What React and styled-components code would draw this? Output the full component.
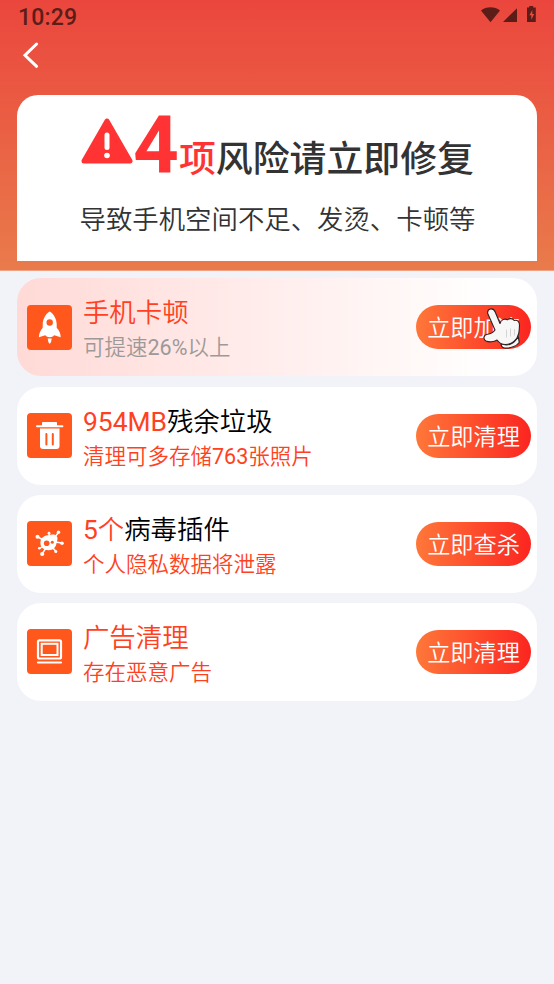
// src/App.jsx
import React from "react";
import styled, { createGlobalStyle } from "styled-components";

const colors = {
  bg: "#f2f3f9",
  red: "#ff3333",
  itemRed: "#ff4122",
  icon: "#ff571c",
  dark: "#333333",
  status: "#5c1d19",
  muted: "#9c9999"
};

const items = [
  {
    id: "speed",
    icon: <RocketIcon />,
    highlight: "手机卡顿",
    title: "",
    desc: "可提速26%以上",
    action: "立即加速",
    active: true
  },
  {
    id: "trash",
    icon: <TrashIcon />,
    highlight: "954MB",
    title: "残余垃圾",
    desc: "清理可多存储763张照片",
    action: "立即清理"
  },
  {
    id: "virus",
    icon: <VirusIcon />,
    highlight: "5个",
    title: "病毒插件",
    desc: "个人隐私数据将泄露",
    action: "立即查杀"
  },
  {
    id: "ads",
    icon: <ScreenIcon />,
    highlight: "广告清理",
    title: "",
    desc: "存在恶意广告",
    action: "立即清理"
  }
];

// Latin letters and digits need a heavier weight than the Chinese text
function MixedText({ text }) {
  return text
    .split(/([\w%]+)/)
    .map((part, i) => (i % 2 ? <Latin key={i}>{part}</Latin> : part));
}

export default function App() {
  return (
    <Screen>
      <GlobalStyle />
      <Header>
        <StatusBar>
          <Clock>10:29</Clock>
          <StatusIcons />
        </StatusBar>
        <NavBar>
          <BackButton aria-label="返回">
            <svg width="18" height="28" viewBox="0 0 18 28" fill="none">
              <path
                d="M15.6 3 4 14.300l11.600 11"
                stroke="#fff"
                strokeWidth="3"
                strokeLinecap="round"
              />
            </svg>
          </BackButton>
        </NavBar>
        <Summary>
          <SummaryTitle>
            <WarningIcon />
            <Count>4</Count>
            <Unit>项</Unit>
            <span>风险请立即修复</span>
          </SummaryTitle>
          <SummaryText>导致手机空间不足、发烫、卡顿等</SummaryText>
        </Summary>
      </Header>

      <List>
        {items.map(item => (
          <Card key={item.id} $active={item.active}>
            <IconBox>{item.icon}</IconBox>
            <Info>
              <ItemTitle>
                <Highlight>
                  <MixedText text={item.highlight} />
                </Highlight>
                {item.title}
              </ItemTitle>
              <ItemDesc $muted={item.active}>
                <MixedText text={item.desc} />
              </ItemDesc>
            </Info>
            <ActionButton>
              {item.action}
              {item.active && <Pointer />}
            </ActionButton>
          </Card>
        ))}
      </List>
    </Screen>
  );
}

function StatusIcons() {
  return (
    <svg width="57" height="20" viewBox="0 0 57 20" fill={colors.status}>
      <path d="M1 4.600C6.400.2 14.600.2 20 4.600L10.500 16.200z" />
      <path d="M37 2.200V16H23z" />
      <path d="M49.200 0h4v1.600h2.600V16H47V1.600h2.200z" />
      <path d="M52.300 4 49.400 9.200h1.900v4.600l2.900-5.800h-1.900z" fill="#eb4b3e" />
    </svg>
  );
}

function WarningIcon() {
  return (
    <WarningSvg width="52" height="47" viewBox="0 0 52 47">
      <path
        d="M26 3 49 43H3z"
        fill={colors.red}
        stroke={colors.red}
        strokeWidth="5"
        strokeLinejoin="round"
      />
      <path d="M26 17v12.500" stroke="#fff" strokeWidth="5" strokeLinecap="round" />
      <circle cx="26" cy="37.500" r="2.800" fill="#fff" />
    </WarningSvg>
  );
}

function RocketIcon() {
  return (
    <svg width="45" height="45" viewBox="0 0 45 45" fill="#fff">
      <path d="M22.700 6.500c-4.200 2.600-7 7.600-7 13v3.300c-1.800 2-3.800 5.400-3.800 9.400l6.300-1.900c1 1.300 2.500 1.900 4.500 1.900s3.500-.6 4.500-1.900l6.500 1.900c0-4-2-7.400-4-9.400v-3.300c0-5.400-2.800-10.400-7-13z" />
      <path d="M20.700 33.500h4l-.6 3.600-1.400 2-1.400-2z" />
      <circle cx="22.700" cy="17.500" r="3.200" fill={colors.icon} />
    </svg>
  );
}

function TrashIcon() {
  return (
    <svg width="45" height="45" viewBox="0 0 45 45" fill="none">
      <path d="M10 13.200h25.400" stroke="#fff" strokeWidth="2" strokeLinecap="round" />
      <path d="M15.500 12.500v-3h14v3z" fill="#fff" stroke="#fff" strokeLinejoin="round" />
      <path d="M13 15.500h19.500V33q0 3-3 3H16q-3 0-3-3z" fill="#fff" />
      <path
        d="M19.400 21v10.500M25.800 21v10.500"
        stroke={colors.icon}
        strokeWidth="2"
        strokeLinecap="round"
      />
    </svg>
  );
}

function VirusIcon() {
  return (
    <svg width="45" height="45" viewBox="0 0 45 45" fill="#fff">
      <path
        d="M16 19 10.500 15.700M22.500 15.500 22 12.300M27.500 16.500l4-5M28 21l7 1M26 27l3 3.500M19 27 15 33M16.500 25.500l-4.200 1.800"
        stroke="#fff"
        strokeWidth="1.500"
      />
      <circle cx="10.500" cy="15.700" r="2" />
      <circle cx="22" cy="12.200" r="1.400" />
      <circle cx="31.500" cy="11.300" r="1.700" />
      <circle cx="35" cy="22.200" r="1.800" />
      <circle cx="28.800" cy="30.500" r="1.500" />
      <circle cx="15.200" cy="33" r="2.100" />
      <circle cx="12.300" cy="27.300" r="1.300" />
      <path d="M13.400 22c0-4.500 3-7.500 7.500-7.800 3-.2 5-1.200 7.200-.2 2.700 1.200 2.700 3.800 2 6-.7 2.300-.6 3.200-1.400 5-1.300 2.800-4 4.200-7.200 4.200-4.700 0-8.100-2.800-8.100-7.200z" />
      <circle cx="19.700" cy="22.300" r="2.800" fill={colors.icon} />
      <circle cx="25.300" cy="21.200" r="1.500" fill={colors.icon} />
    </svg>
  );
}

function ScreenIcon() {
  return (
    <svg width="45" height="45" viewBox="0 0 45 45" fill="none" stroke="#fff">
      <rect x="11" y="11.300" width="23" height="18.200" rx="1.500" strokeWidth="2.200" />
      <rect x="14.700" y="14.800" width="15.800" height="11.200" strokeWidth="2" />
      <path d="M11 33.500h23" strokeWidth="2.200" strokeLinecap="round" />
    </svg>
  );
}

function Pointer() {
  return (
    <PointerSvg width="40" height="44" viewBox="0 0 40 44">
      <g fill="#f7f7f7" stroke="#2b2222" strokeWidth="1.100" strokeLinejoin="round">
        <path d="M19 36.500c6 3 13 1 17.300-7l.9 6c-2.500 3.500-8.700 6.300-14.700 5.500-2-.3-3.500-2-3.500-4.500z" />
        <path d="M5.700 6.500c-.8-5 5.500-6.500 7.500-1.500l4.800 11.500c1-3.800 4.800-5.300 7.500-3.700 2-1.800 5.500-1.500 6.700.7 3-.8 5.300 1 5.300 4.500-.1 3-.2 5.500-.7 8-1.500 7-7 11.500-13.300 11.500-4 0-6.500-1.500-8.500-4.500-3 2-8 2.500-11 1-3.200-1.700-2.500-6.200 1.500-6.800 3.300-.3 5.500-1.200 7.500-4.200z" />
      </g>
      <path
        d="M24.500 22.500v8M28.500 21.500v8M32.500 22v6.500"
        stroke="#d0d0d0"
        strokeWidth=".9"
      />
    </PointerSvg>
  );
}

// Styled Components
const GlobalStyle = createGlobalStyle`
  * {
    box-sizing: border-box;
  }
  body {
    margin: 0;
    background: ${colors.bg};
    font-family: Roboto, "Noto Sans CJK SC", sans-serif;
  }
`;
const Screen = styled.div`
  min-height: 100vh;
  background: ${colors.bg};
`;
const Header = styled.header`
  height: 271px;
  padding: 0 17px;
  background: linear-gradient(#eb463d, #e97b4b);
  border-bottom: 1px solid #f0a384;
`;
const StatusBar = styled.div`
  display: flex;
  justify-content: space-between;
  align-items: flex-start;
  height: 34px;
  padding: 6px 0 0 1px;
`;
const Clock = styled.span`
  font-size: 23px;
  line-height: 23px;
  font-weight: 500;
  letter-spacing: 0.2px;
  color: ${colors.status};
`;
const NavBar = styled.nav`
  height: 61px;
  padding: 7px 4px;
`;
const BackButton = styled.button`
  display: flex;
  padding: 0;
  border: none;
  background: none;
  cursor: pointer;
`;
const Summary = styled.section`
  height: 166px;
  padding: 3px 0 0 1px;
  border-radius: 21px 21px 0 0;
  background: #fff;
  color: ${colors.dark};
`;
const SummaryTitle = styled.h1`
  display: flex;
  justify-content: center;
  align-items: baseline;
  height: 100px;
  margin: 0;
  font-size: 36.900px;
  line-height: 94px;
  font-weight: 500;
  white-space: nowrap;
`;
const WarningSvg = styled.svg`
  align-self: flex-start;
  margin-top: 20px;
`;
const Count = styled.span`
  font-size: 80px;
  font-weight: 700;
  color: ${colors.red};
`;
const Unit = styled.span`
  color: ${colors.red};
`;
const SummaryText = styled.p`
  margin: 0;
  font-size: 26.400px;
  line-height: 44px;
  font-weight: 350;
  text-align: center;
  white-space: nowrap;
`;
const List = styled.main`
  display: flex;
  flex-direction: column;
  gap: 10.200px;
  padding: 7.400px 17px;
`;
const Card = styled.article`
  display: flex;
  align-items: center;
  height: 98px;
  padding: 0 6px 0 10.400px;
  border-radius: 24px;
  background: ${({ $active }) =>
    $active ? "linear-gradient(90deg, #ffdad7, #fff 92%)" : "#fff"};
`;
const IconBox = styled.div`
  width: 45px;
  height: 45px;
  border-radius: 4px;
  background: ${colors.icon};
  svg {
    display: block;
  }
`;
const Info = styled.div`
  flex: 1;
  padding: 7px 0 0 10.600px;
  white-space: nowrap;
`;
const ItemTitle = styled.h2`
  margin: 0;
  font-size: 26.400px;
  line-height: 35px;
  font-weight: 350;
  color: #000;
`;
const Highlight = styled.span`
  color: ${colors.itemRed};
`;
const Latin = styled.span`
  font-weight: 400;
`;
const ItemDesc = styled.p`
  margin: 0;
  font-size: 21.500px;
  line-height: 34px;
  font-weight: 350;
  color: ${({ $muted }) => ($muted ? colors.muted : colors.itemRed)};
`;
const ActionButton = styled.button`
  position: relative;
  width: 115px;
  height: 44px;
  padding: 2px 0 0;
  border: none;
  border-radius: 22px;
  background: linear-gradient(90deg, #ff7739, #fb2520);
  color: #fff;
  font-family: inherit;
  font-size: 23.200px;
  line-height: 42px;
  font-weight: 350;
  white-space: nowrap;
  cursor: pointer;
`;
const PointerSvg = styled.svg`
  position: absolute;
  top: 2px;
  left: 66px;
`;
